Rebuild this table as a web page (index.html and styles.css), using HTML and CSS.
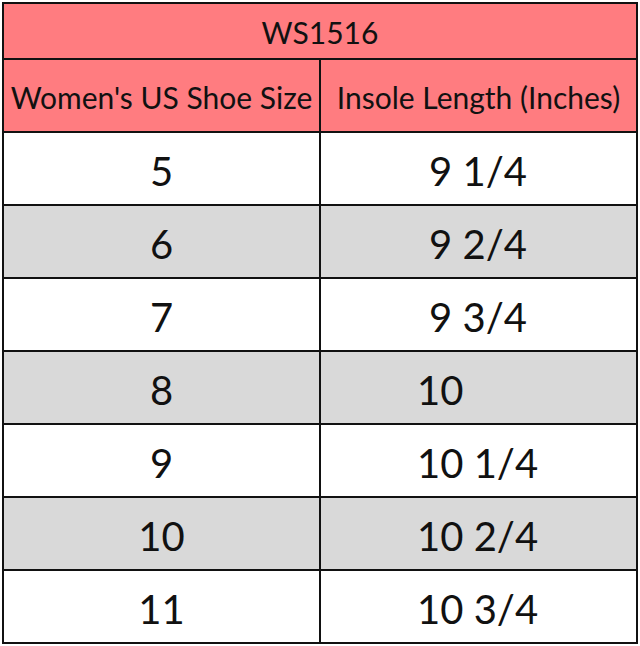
FILE: index.html
```html
<!DOCTYPE html>
<html>
<head>
<meta charset="utf-8">
<link rel="stylesheet" href="styles.css">
</head>
<body>
<table class="size-table">
  <tr class="title-row"><td colspan="2">WS1516</td></tr>
  <tr class="head-row"><td>Women's US Shoe Size</td><td class="head-right">Insole Length (Inches)</td></tr>
  <tr class="row"><td class="size">5</td><td class="len len-9">9 1/4</td></tr>
  <tr class="row alt"><td class="size">6</td><td class="len len-9">9 2/4</td></tr>
  <tr class="row"><td class="size">7</td><td class="len len-9">9 3/4</td></tr>
  <tr class="row alt"><td class="size">8</td><td class="len">10</td></tr>
  <tr class="row"><td class="size">9</td><td class="len">10 1/4</td></tr>
  <tr class="row alt"><td class="size">10</td><td class="len">10 2/4</td></tr>
  <tr class="row"><td class="size">11</td><td class="len">10 3/4</td></tr>
</table>
</body>
</html>
```
FILE: styles.css
```css
html, body {
  margin: 0;
  padding: 0;
  background: #ffffff;
}
body {
  padding: 2px 2px 0 2px;
  font-family: Lato, "Open Sans", sans-serif;
  color: #111;
}
.size-table {
  border-collapse: collapse;
  width: 636px;
  table-layout: fixed;
}
.size-table td {
  border: 2px solid #111;
  padding: 0;
  vertical-align: middle;
  box-sizing: border-box;
}
.title-row td {
  height: 56px;
  background: #ff7c80;
  text-align: center;
  font-size: 30px;
  padding-top: 2px;
}
.head-row td {
  height: 73px;
  background: #ff7c80;
  font-size: 30px;
  text-align: center;
  white-space: nowrap;
  padding-top: 2px;
}
.head-row td:first-child {
  width: 318px;
}
.row td {
  height: 73px;
  background: #ffffff;
  font-size: 40px;
  padding-top: 5px;
}
.row.alt td {
  background: #d9d9d9;
}
.size {
  text-align: center;
}
.len {
  text-align: left;
  padding-left: 96px !important;
}
.len-9 {
  padding-left: 108px !important;
}
```
